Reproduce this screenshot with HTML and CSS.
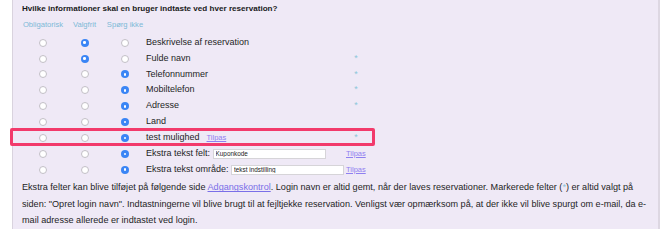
FILE: index.html
```html
<!DOCTYPE html>
<html lang="da">
<head>
<meta charset="utf-8">
<title>Informationer</title>
<link rel="stylesheet" href="styles.css">
</head>
<body>
<div class="panel">
  <h3 class="title">Hvilke informationer skal en bruger indtaste ved hver reservation?</h3>
  <div class="row head">
    <div class="hdr">Obligatorisk</div>
    <div class="hdr">Valgfrit</div>
    <div class="hdr">Spørg ikke</div>
  </div>
  <div class="row">
    <span class="cell"><span class="radio"></span></span>
    <span class="cell"><span class="radio on"></span></span>
    <span class="cell"><span class="radio"></span></span>
    <span class="label">Beskrivelse af reservation</span>
    <span class="extra"></span>
  </div>
  <div class="row">
    <span class="cell"><span class="radio"></span></span>
    <span class="cell"><span class="radio on"></span></span>
    <span class="cell"><span class="radio"></span></span>
    <span class="label">Fulde navn</span>
    <span class="extra star">*</span>
  </div>
  <div class="row">
    <span class="cell"><span class="radio"></span></span>
    <span class="cell"><span class="radio"></span></span>
    <span class="cell"><span class="radio on"></span></span>
    <span class="label">Telefonnummer</span>
    <span class="extra star">*</span>
  </div>
  <div class="row">
    <span class="cell"><span class="radio"></span></span>
    <span class="cell"><span class="radio"></span></span>
    <span class="cell"><span class="radio on"></span></span>
    <span class="label">Mobiltelefon</span>
    <span class="extra star">*</span>
  </div>
  <div class="row">
    <span class="cell"><span class="radio"></span></span>
    <span class="cell"><span class="radio"></span></span>
    <span class="cell"><span class="radio on"></span></span>
    <span class="label">Adresse</span>
    <span class="extra star">*</span>
  </div>
  <div class="row">
    <span class="cell"><span class="radio"></span></span>
    <span class="cell"><span class="radio"></span></span>
    <span class="cell"><span class="radio on"></span></span>
    <span class="label">Land</span>
    <span class="extra"></span>
  </div>
  <div class="row">
    <span class="cell"><span class="radio"></span></span>
    <span class="cell"><span class="radio"></span></span>
    <span class="cell"><span class="radio on"></span></span>
    <span class="label">test mulighed <a class="tilpas inline" href="#">Tilpas</a></span>
    <span class="extra star">*</span>
  </div>
  <div class="row">
    <span class="cell"><span class="radio"></span></span>
    <span class="cell"><span class="radio"></span></span>
    <span class="cell"><span class="radio on"></span></span>
    <span class="label">Ekstra tekst felt: <input class="field" type="text" value="Kuponkode"></span>
    <span class="extra"><a class="tilpas" href="#">Tilpas</a></span>
  </div>
  <div class="row">
    <span class="cell"><span class="radio"></span></span>
    <span class="cell"><span class="radio"></span></span>
    <span class="cell"><span class="radio on"></span></span>
    <span class="label">Ekstra tekst område: <input class="field" type="text" value="tekst indstilling"></span>
    <span class="extra"><a class="tilpas" href="#">Tilpas</a></span>
  </div>
  <p class="note">Ekstra felter kan blive tilføjet på følgende side <a class="link" href="#">Adgangskontrol</a>. Login navn er altid gemt, når der laves reservationer. Markerede felter (<span class="star">*</span>) er altid valgt på siden: "Opret login navn". Indtastningerne vil blive brugt til at fejltjekke reservation. Venligst vær opmærksom på, at der ikke vil blive spurgt om e-mail, da e-mail adresse allerede er indtastet ved login.</p>
  <div class="highlight"></div>
</div>
</body>
</html>
```

FILE: styles.css
```css
html, body {
  margin: 0;
  padding: 0;
  background: #ffffff;
}

body {
  font-family: "Liberation Sans", Arial, sans-serif;
  color: #1e1e1e;
}

.panel {
  position: relative;
  margin-left: 12px;
  width: 648px;
  min-height: 229px;
  box-sizing: border-box;
  padding: 4px 6px 0 9px;
  background: #efe9f6;
  border-left: 1px solid #d9d3de;
  border-right: 2px solid #ddd7e2;
}

.title {
  margin: 0;
  font-size: 8.1px;
  line-height: 10px;
  font-weight: bold;
  color: #1a1a1a;
}

.row {
  display: grid;
  grid-template-columns: 42px 41px 40px 201px 20px;
  align-items: center;
  height: 15.9px;
}

.row.head {
  margin-top: 5.4px;
  margin-bottom: 3.35px;
  height: 12px;
}

.hdr {
  font-size: 7.6px;
  line-height: 12px;
  color: #7db9d6;
  text-align: center;
  white-space: nowrap;
}

.cell {
  display: flex;
  justify-content: center;
  align-items: center;
  height: 15.9px;
}

.radio {
  position: relative;
  width: 8px;
  height: 8px;
  box-sizing: border-box;
  border-radius: 50%;
  background: #ffffff;
  border: 1px solid #c2bfc6;
}

.radio.on {
  background: #3a85f5;
  border: none;
}

.radio.on::after {
  content: "";
  position: absolute;
  left: 2.7px;
  top: 2.7px;
  width: 2.6px;
  height: 2.6px;
  border-radius: 50%;
  background: #ffffff;
}

.label {
  padding-left: 1px;
  font-size: 9px;
  line-height: 15.9px;
  white-space: nowrap;
  display: flex;
  align-items: center;
}

.field {
  margin-left: 2.5px;
  width: 113px;
  height: 10.5px;
  box-sizing: border-box;
  padding: 0 2px;
  border: 1px solid #d6d4d8;
  background: #ffffff;
  font-family: "Liberation Sans", Arial, sans-serif;
  font-size: 6.4px;
  color: #222;
  outline: none;
}

.extra {
  font-size: 7.5px;
  line-height: 15.9px;
  white-space: nowrap;
}

.extra.star {
  text-align: center;
  font-size: 9px;
}

.star {
  color: #8cc6da;
}

.tilpas {
  color: #8f80f0;
  text-decoration: underline;
  font-size: 7.5px;
}

.tilpas.inline {
  margin-left: 7px;
}

.note {
  margin: 1.7px 0 0 0;
  font-size: 9.1px;
  line-height: 16.5px;
  color: #1e1e1e;
}

.link {
  color: #7a6fe8;
  text-decoration: underline;
}

.highlight {
  position: absolute;
  left: -3px;
  top: 128px;
  width: 365px;
  height: 18px;
  box-sizing: border-box;
  border: 3.5px solid #f23a6b;
  border-radius: 2px;
  pointer-events: none;
}
```
